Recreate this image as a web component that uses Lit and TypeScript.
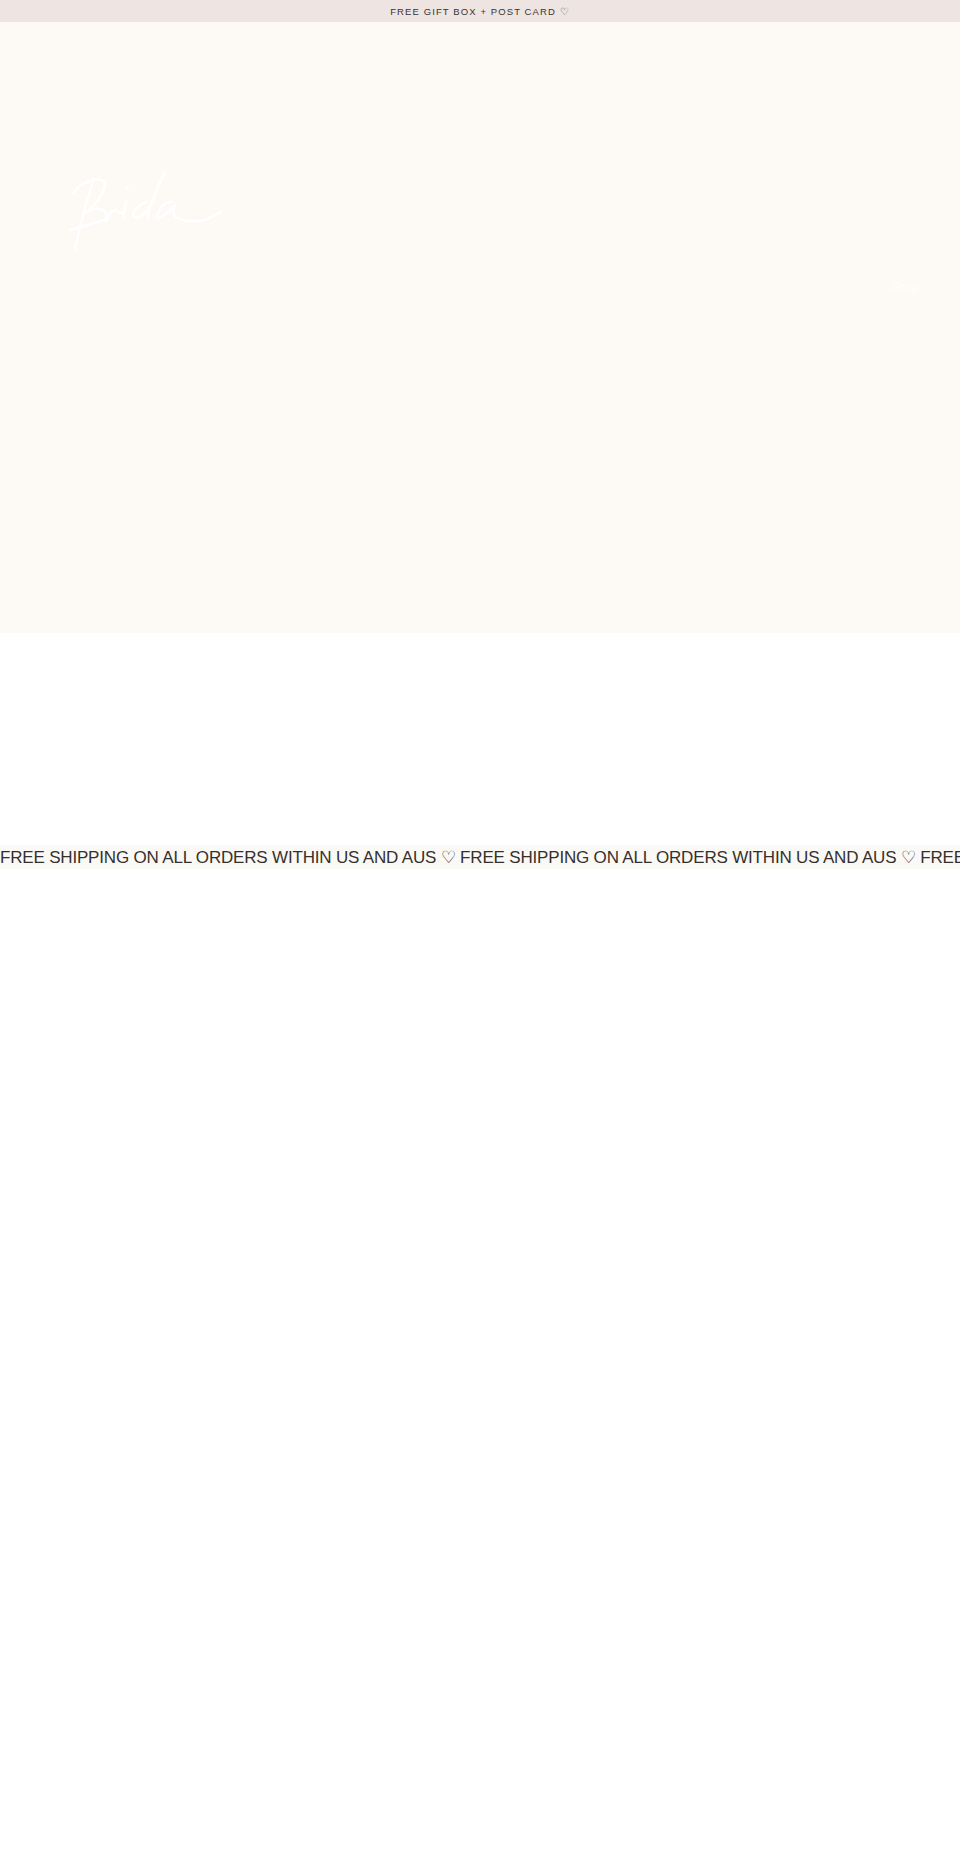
import { LitElement, css, html } from "lit";
import { customElement } from "lit/decorators.js";

const MARQUEE = "FREE SHIPPING ON ALL ORDERS WITHIN US AND AUS ♡ ";

@customElement("app-root")
export class AppRoot extends LitElement {
  static styles = css`
    :host {
      display: block;
      height: 1875px;
      background: #fff;
      font-family: "Liberation Sans", Arial, sans-serif;
      color: #35302c;
      overflow: hidden;
    }
    .announcement {
      height: 22px;
      display: flex;
      align-items: center;
      justify-content: center;
      background: #eee4e1;
      font-size: 9.5px;
      letter-spacing: 1.1px;
      color: #3a3331;
    }
    .hero {
      position: relative;
      height: 611px;
      background: #fdfaf5;
    }
    .logo {
      position: absolute;
      left: 50px;
      top: 128px;
      width: 200px;
      height: 120px;
      fill: none;
      stroke: #fff;
      stroke-width: 7.5;
      stroke-linecap: round;
      stroke-linejoin: round;
    }
    .shop {
      position: absolute;
      left: 891px;
      top: 258px;
      font-size: 12px;
      color: #fff;
    }
    .strip {
      margin-top: 212px;
      height: 24px;
      display: flex;
      align-items: center;
      background: #fbf9f6;
      font-size: 17px;
      letter-spacing: -0.18px;
      white-space: nowrap;
      overflow: hidden;
    }
  `;

  render() {
    return html`
      <div class="announcement">FREE GIFT BOX + POST CARD ♡</div>
      <div class="hero">
        <svg class="logo" viewBox="0 0 600 360">
          <path d="M70 130C78 112 100 98 130 90C158 84 172 96 160 122C148 150 124 176 104 190" />
          <path d="M130 85C122 120 112 150 105 172C94 216 84 258 75 300" />
          <path d="M110 188C140 166 164 176 170 196C172 212 146 214 122 222C100 230 78 236 60 240" />
          <path d="M168 214C176 196 188 178 196 180C204 184 208 190 216 190" />
          <path d="M228 155C226 172 222 188 220 205" />
          <path d="M232 114L233 118" />
          <path d="M290 155C270 162 250 180 250 195C254 210 276 204 300 170" />
          <path d="M345 65C328 102 312 138 300 170C296 184 294 196 295 205" />
          <path d="M365 155C344 158 326 172 320 205C334 204 358 186 375 165C370 180 368 190 372 196C384 212 420 216 450 212C474 208 494 198 510 185" />
        </svg>
        <span class="shop">Shop</span>
      </div>
      <div class="strip">${MARQUEE}${MARQUEE}${MARQUEE}</div>
    `;
  }
}
